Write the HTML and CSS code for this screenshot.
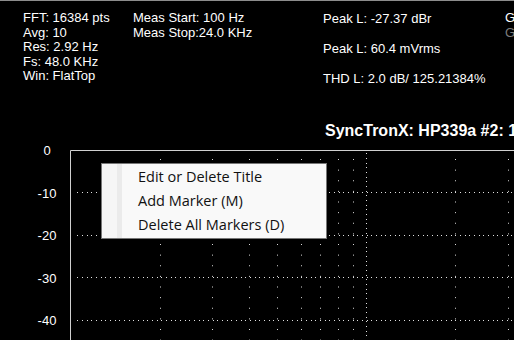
FILE: index.html
```html
<!DOCTYPE html>
<html>
<head>
<meta charset="utf-8">
<link rel="stylesheet" href="styles.css">
</head>
<body>
<div class="screen">
  <div class="header">
    <div class="col col1">
      <div>FFT: 16384 pts</div>
      <div>Avg: 10</div>
      <div>Res: 2.92 Hz</div>
      <div>Fs: 48.0 KHz</div>
      <div>Win: FlatTop</div>
    </div>
    <div class="col col2">
      <div>Meas Start: 100 Hz</div>
      <div>Meas Stop:24.0 KHz</div>
    </div>
    <div class="col col3">
      <div>Peak L: -27.37 dBr</div>
      <div>Peak L: 60.4 mVrms</div>
      <div>THD L: 2.0 dB/ 125.21384%</div>
    </div>
    <div class="col col4">
      <div>G</div>
      <div class="dim">G</div>
    </div>
  </div>
  <div class="title">SyncTronX: HP339a #2: 1kHz</div>
  <div class="plotrow">
    <div class="yaxis">
      <div>0</div>
      <div>-10</div>
      <div>-20</div>
      <div>-30</div>
      <div>-40</div>
    </div>
    <svg class="plot" width="444" height="190" viewBox="0 0 444 190">
      <g class="minor">
        <line x1="90.5" y1="9" x2="90.5" y2="190"/>
        <line x1="142.5" y1="9" x2="142.5" y2="190"/>
        <line x1="179.5" y1="9" x2="179.5" y2="190"/>
        <line x1="207.5" y1="9" x2="207.5" y2="190"/>
        <line x1="231.5" y1="9" x2="231.5" y2="190"/>
        <line x1="250.5" y1="9" x2="250.5" y2="190"/>
        <line x1="268.5" y1="9" x2="268.5" y2="190"/>
        <line x1="283.5" y1="9" x2="283.5" y2="190"/>
        <line x1="385.5" y1="9" x2="385.5" y2="190"/>
        <line x1="438.5" y1="9" x2="438.5" y2="190"/>
      </g>
      <g class="major">
        <line x1="7" y1="42.5" x2="444" y2="42.5"/>
        <line x1="7" y1="85.5" x2="444" y2="85.5"/>
        <line x1="7" y1="127.5" x2="444" y2="127.5"/>
        <line x1="7" y1="170.5" x2="444" y2="170.5"/>
        <line x1="296.5" y1="3" x2="296.5" y2="190"/>
      </g>
      <g class="frame">
        <line x1="0.5" y1="0.5" x2="444" y2="0.5"/>
        <line x1="0.5" y1="0.5" x2="0.5" y2="190"/>
      </g>
    </svg>
  </div>
  <div class="menu">
    <div class="item">Edit or Delete Title</div>
    <div class="item">Add Marker (M)</div>
    <div class="item">Delete All Markers (D)</div>
  </div>
</div>
</body>
</html>
```

FILE: styles.css
```css
html, body {
  margin: 0;
  padding: 0;
  background: #000;
}
.screen {
  position: relative;
  width: 514px;
  height: 340px;
  overflow: hidden;
  background: #000;
  color: #fff;
  font-family: "Liberation Sans", Arial, sans-serif;
  font-size: 13px;
}
.header {
  display: flex;
  height: 112px;
  box-sizing: border-box;
  padding: 10px 0 0 23px;
  border-top: 1px solid #8c8c8c;
}
.col {
  display: flex;
  flex-direction: column;
  flex: none;
  white-space: nowrap;
  line-height: 14.5px;
}
.col1 { width: 110px; }
.col2 { width: 190px; }
.col3 { width: 182px; line-height: 15px; gap: 15px; }
.col4 { width: 40px; }
.dim { color: #7c7c7c; }
.title {
  height: 38px;
  box-sizing: border-box;
  padding: 10px 0 0 325px;
  font-weight: bold;
  font-size: 16px;
  line-height: 18px;
  white-space: nowrap;
}
.plotrow {
  display: flex;
  height: 190px;
}
.yaxis {
  width: 70px;
  flex: none;
  box-sizing: border-box;
  padding-left: 24px;
  margin-top: -20px;
  display: flex;
  flex-direction: column;
}
.yaxis div {
  height: 42.5px;
  line-height: 42.5px;
  text-align: center;
}
.plot {
  display: block;
  flex: none;
}
.frame line {
  stroke: #d0d0d0;
  stroke-width: 1;
}
.major line {
  stroke: #e0e0e0;
  stroke-width: 1;
  stroke-dasharray: 1 4 1 4 1 3;
}
.minor line {
  stroke: #d8d8d8;
  stroke-width: 1;
  stroke-dasharray: 1 9.625;
}
.menu {
  position: absolute;
  left: 101px;
  top: 163px;
  width: 226px;
  height: 76px;
  box-sizing: border-box;
  padding-top: 1px;
  border: 1px solid #767676;
  background: linear-gradient(to right, #f6f6f6 0 15px, #ebebeb 15px 20px, #f9f9f9 20px);
  font-family: "Open Sans", "Noto Sans", sans-serif;
  font-size: 14.5px;
  color: #111;
}
.item {
  height: 24px;
  line-height: 24px;
  padding-left: 36px;
  white-space: nowrap;
}
```
